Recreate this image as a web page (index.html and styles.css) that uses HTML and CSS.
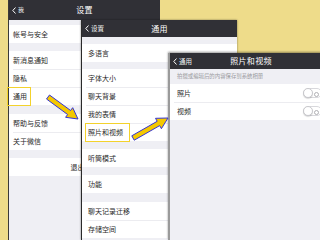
FILE: index.html
```html
<!DOCTYPE html>
<html lang="zh">
<head>
<meta charset="utf-8">
<title>设置</title>
<link rel="stylesheet" href="styles.css">
</head>
<body>
<div class="stage">
  <section class="screen s1">
    <header class="bar bar-1">
      <span class="back"><svg class="chev" viewBox="0 0 4 7"><polyline points="3.5,0.5 0.8,3.5 3.5,6.5"/></svg>我</span>
      <span class="title">设置</span>
    </header>
    <div class="gap g5"></div>
    <div class="group"><div class="row">帐号与安全</div></div>
    <div class="gap g8"></div>
    <div class="group">
      <div class="row">新消息通知</div>
      <div class="row">隐私</div>
      <div class="row">通用</div>
    </div>
    <div class="gap g9"></div>
    <div class="group">
      <div class="row">帮助与反馈</div>
      <div class="row">关于微信</div>
    </div>
    <div class="gap g8"></div>
    <div class="group"><div class="row center">退出登录</div></div>
  </section>

  <section class="screen s2">
    <header class="bar bar-2">
      <span class="back"><svg class="chev" viewBox="0 0 4 7"><polyline points="3.5,0.5 0.8,3.5 3.5,6.5"/></svg>设置</span>
      <span class="title">通用</span>
    </header>
    <div class="gap g7"></div>
    <div class="group"><div class="row">多语言</div></div>
    <div class="gap g7"></div>
    <div class="group">
      <div class="row">字体大小</div>
      <div class="row">聊天背景</div>
      <div class="row">我的表情</div>
      <div class="row">照片和视频</div>
    </div>
    <div class="gap g8"></div>
    <div class="group"><div class="row">听筒模式</div></div>
    <div class="gap g8"></div>
    <div class="group"><div class="row">功能</div></div>
    <div class="gap g9"></div>
    <div class="group">
      <div class="row">聊天记录迁移</div>
      <div class="row">存储空间</div>
    </div>
  </section>

  <section class="screen s3">
    <header class="bar bar-3">
      <span class="back"><svg class="chev" viewBox="0 0 4 7"><polyline points="3.5,0.5 0.8,3.5 3.5,6.5"/></svg>通用</span>
      <span class="title">照片和视频</span>
    </header>
    <div class="section-note">拍摄或编辑后的内容保存到系统相册</div>
    <div class="group">
      <div class="row">照片<span class="toggle"><span class="knob"></span><span class="ring"></span></span></div>
      <div class="row">视频<span class="toggle"><span class="knob"></span><span class="ring"></span></span></div>
    </div>
  </section>

  <div class="mark mark-1"></div>
  <div class="mark mark-2"></div>

  <svg class="arrows" viewBox="0 0 320 240" width="320" height="240">
    <polygon points="49.5,95 70.6,110.5 72.7,107.7 78,119 65.6,117.3 67.6,114.5 46.5,99"/>
    <polygon points="131.8,135.8 157.2,121.3 155.5,118.3 168,118 161.4,128.7 159.7,125.6 134.2,140.2"/>
  </svg>
</div>
</body>
</html>
```

FILE: styles.css
```css
html, body {
  margin: 0;
  padding: 0;
}
body {
  width: 320px;
  height: 240px;
  overflow: hidden;
  background: #eedc8a;
  font-family: "Noto Sans CJK SC", "Noto Sans", sans-serif;
  color: #222;
}
.stage {
  position: relative;
  width: 320px;
  height: 240px;
  overflow: hidden;
}
.screen {
  position: absolute;
  display: flex;
  flex-direction: column;
  background: #efeff4;
  box-sizing: border-box;
  overflow: hidden;
}
.s1 {
  left: 8px;
  top: 0;
  width: 152px;
  height: 240px;
  border-left: 1px solid #3a3a3a;
}
.s2 {
  left: 81px;
  top: 20px;
  width: 156px;
  height: 220px;
  border-left: 1px solid #2a2a2a;
  box-shadow: 0 0 2px rgba(0,0,0,0.45);
}
.s3 {
  left: 168px;
  top: 53px;
  width: 158px;
  height: 187px;
  border-left: 2px solid #9a9a9a;
  box-shadow: 0 -1px 2px rgba(0,0,0,0.4);
}
.bar {
  position: relative;
  flex: none;
  display: flex;
  align-items: center;
  justify-content: center;
  background: #303036;
  color: #fff;
}
.bar-1 { height: 20px; }
.bar-2 { height: 17px; }
.bar-3 { height: 16px; }
.title {
  font-size: 8px;
  line-height: 1;
  letter-spacing: 0.3px;
}
.bar-3 .title { transform: translateX(3px); }
.back {
  position: absolute;
  left: 3px;
  top: 0;
  bottom: 0;
  display: flex;
  align-items: center;
  gap: 2px;
  font-size: 6.5px;
  line-height: 1;
  color: #f2f2f2;
}
.bar-1 .back { left: 3px; font-size: 6px; }
.chev {
  width: 4px;
  height: 7px;
  overflow: visible;
}
.chev polyline {
  fill: none;
  stroke: #fff;
  stroke-width: 1;
}
.gap { flex: none; }
.g5 { height: 5px; }
.g7 { height: 7px; }
.g8 { height: 8px; }
.g9 { height: 9px; }
.group {
  flex: none;
  background: #fff;
}
.row {
  position: relative;
  height: 18px;
  display: flex;
  align-items: center;
  padding-left: 4px;
  font-size: 7px;
  line-height: 1;
  color: #2a2a2a;
}
.s2 .row { padding-left: 6px; }
.s3 .row { padding-left: 7px; padding-right: 4px; justify-content: space-between; }
.row + .row::before {
  content: "";
  position: absolute;
  left: 4px;
  right: 0;
  top: 0;
  border-top: 1px solid #ececf0;
}
.row.center {
  justify-content: center;
  padding-left: 0;
}
.section-note {
  flex: none;
  height: 15px;
  display: flex;
  align-items: center;
  padding-left: 7px;
  font-size: 5.4px;
  line-height: 1;
  color: #9a9a9e;
}
.toggle {
  position: relative;
  width: 19px;
  height: 10px;
  box-sizing: border-box;
  border: 1px solid #d8d8dc;
  border-radius: 6px;
  background: #fff;
}
.knob {
  position: absolute;
  left: -1px;
  top: -1px;
  width: 10px;
  height: 10px;
  box-sizing: border-box;
  border-radius: 50%;
  background: #fff;
  border: 1px solid #c8c8cc;
  box-shadow: 0 1px 1px rgba(0,0,0,0.15);
}
.ring {
  position: absolute;
  right: 2px;
  top: 2.5px;
  width: 3px;
  height: 3px;
  border: 0.7px solid #b0b0b4;
  border-radius: 50%;
}
.mark {
  position: absolute;
  box-sizing: border-box;
  border: 1.5px solid #f3d22c;
}
.mark-1 {
  left: 7px;
  top: 87px;
  width: 24px;
  height: 19px;
}
.mark-2 {
  left: 85px;
  top: 123px;
  width: 45px;
  height: 19px;
}
.arrows {
  position: absolute;
  left: 0;
  top: 0;
}
.arrows polygon {
  fill: #f4c800;
  stroke: #3434d8;
  stroke-width: 1;
  stroke-linejoin: miter;
}
```
